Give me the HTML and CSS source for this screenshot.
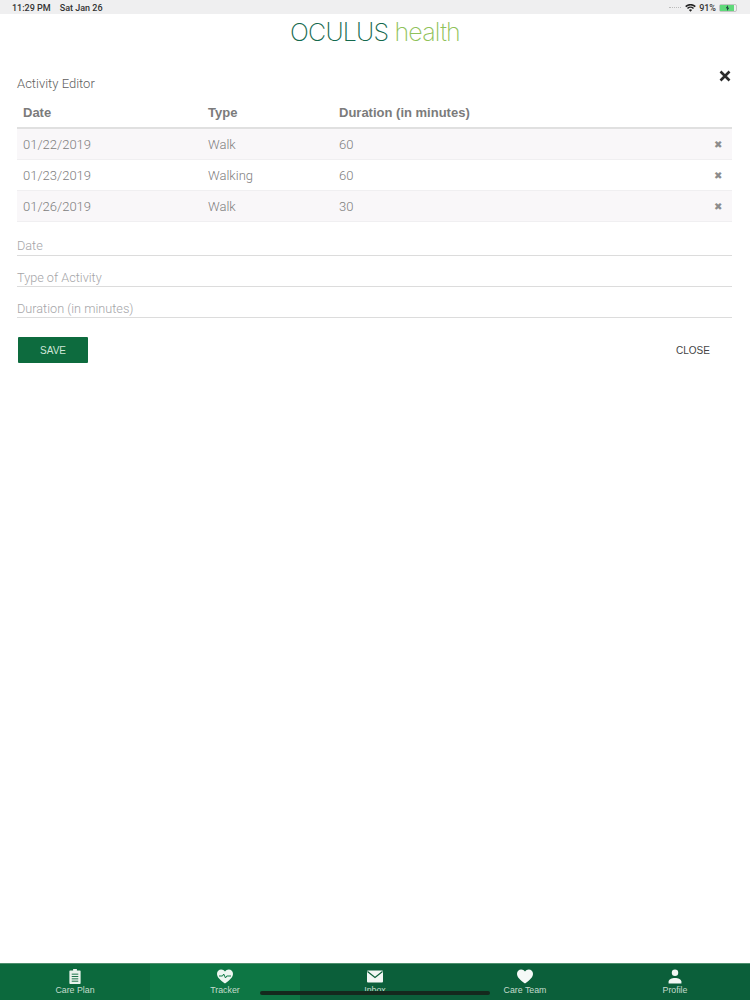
FILE: index.html
```html
<!DOCTYPE html>
<html lang="en">
<head>
<meta charset="utf-8">
<title>Activity Editor</title>
<link rel="stylesheet" href="styles.css">
</head>
<body>
<div class="page">
  <div class="statusbar">
    <div class="status-left"><span>11:29 PM</span><span>Sat Jan 26</span></div>
    <div class="status-right">
      <span class="cell-dots"></span>
      <svg class="wifi" viewBox="0 0 12 9"><path d="M6 8.8 4.2 6.8a2.6 2.6 0 0 1 3.6 0ZM3.2 5.7 2 4.4a5.7 5.7 0 0 1 8 0L8.8 5.7a4 4 0 0 0-5.6 0ZM1.2 3.6 0 2.3a8.6 8.6 0 0 1 12 0l-1.2 1.3a7 7 0 0 0-9.6 0Z" fill="#222"/></svg>
      <span>91%</span>
      <span class="battery"><span class="battery-fill"><svg class="bolt" viewBox="0 0 6 8"><path d="M3.6 0 .8 4.4h2L2.4 8l2.8-4.4h-2Z" fill="#123"/></svg></span></span>
    </div>
  </div>
  <header class="brand"><span class="brand-dark">OCULUS</span> <span class="brand-light">health</span></header>
  <main class="editor">
    <div class="editor-head">
      <h1>Activity Editor</h1>
      <svg class="close-x" viewBox="0 0 12 12"><path d="M1.5 1.5 10.5 10.5M10.5 1.5 1.5 10.5" stroke="#2b2b2b" stroke-width="2.6" fill="none"/></svg>
    </div>
    <div class="table">
      <div class="row head"><span class="c1">Date</span><span class="c2">Type</span><span class="c3">Duration (in minutes)</span></div>
      <div class="row odd"><span class="c1">01/22/2019</span><span class="c2">Walk</span><span class="c3">60</span><span class="del">✖</span></div>
      <div class="row"><span class="c1">01/23/2019</span><span class="c2">Walking</span><span class="c3">60</span><span class="del">✖</span></div>
      <div class="row odd"><span class="c1">01/26/2019</span><span class="c2">Walk</span><span class="c3">30</span><span class="del">✖</span></div>
    </div>
    <div class="fields">
      <div class="field">Date</div>
      <div class="field">Type of Activity</div>
      <div class="field">Duration (in minutes)</div>
    </div>
    <div class="actions">
      <button class="save">SAVE</button>
      <button class="close">CLOSE</button>
    </div>
  </main>
  <nav class="tabbar">
    <div class="tab first">
      <svg viewBox="0 0 14 16"><path d="M5 0h4v1.5h3.2a.8.8 0 0 1 .8.8v12.9a.8.8 0 0 1-.8.8H1.800a.8.8 0 0 1-.8-.8V2.300a.8.8 0 0 1 .8-.8H5Z" fill="#e8f2ec"/><path d="M3.500 5.500h7M3.500 8h7M3.500 10.500h7M3.500 13h7" stroke="#0f6b3f" stroke-width="1"/></svg>
      <span>Care Plan</span>
    </div>
    <div class="tab active">
      <svg viewBox="0 0 16 14"><path d="M8 14C3 10.500 0 7.800 0 4.300 0 1.800 1.900 0 4.200 0 5.800 0 7.200.8 8 2.100 8.800.8 10.200 0 11.800 0 14.100 0 16 1.800 16 4.300 16 7.800 13 10.500 8 14Z" fill="#eef6f1"/><path d="M2 6.500h3.500l1.200-2 1.800 4 1.200-2H14" stroke="#0f7a46" stroke-width="1" fill="none"/></svg>
      <span>Tracker</span>
    </div>
    <div class="tab">
      <svg viewBox="0 0 16 12"><rect width="16" height="12" rx="1" fill="#f2f7f4"/><path d="M.5 1 8 7l7.500-6" stroke="#0b5f38" stroke-width="1.200" fill="none"/></svg>
      <span>Inbox</span>
    </div>
    <div class="tab">
      <svg viewBox="0 0 16 14"><path d="M8 14C3 10.500 0 7.800 0 4.300 0 1.800 1.900 0 4.200 0 5.800 0 7.200.8 8 2.100 8.800.8 10.200 0 11.800 0 14.100 0 16 1.800 16 4.300 16 7.800 13 10.500 8 14Z" fill="#f5f9f7"/></svg>
      <span>Care Team</span>
    </div>
    <div class="tab">
      <svg viewBox="0 0 14 14"><circle cx="7" cy="3.500" r="3" fill="#f2f7f4"/><path d="M1 13.500v-1.500C1 9.800 4 8.400 7 8.400s6 1.400 6 3.600v1.500Z" fill="#f2f7f4"/></svg>
      <span>Profile</span>
    </div>
    <div class="home-bar"></div>
  </nav>
</div>
</body>
</html>
```

FILE: styles.css
```css
* { box-sizing: border-box; }
html, body { margin: 0; padding: 0; background: #fff; }
.page {
  width: 750px;
  height: 1000px;
  display: flex;
  flex-direction: column;
  font-family: Roboto, "Liberation Sans", Arial, sans-serif;
  font-weight: 300;
  overflow: hidden;
}
.statusbar {
  height: 14px;
  flex: none;
  background: #efeff0;
  display: flex;
  align-items: center;
  justify-content: space-between;
  padding: 3px 13px 1px 12px;
  font-size: 9px;
  font-weight: 500;
  color: #333;
}
.status-left { display: flex; gap: 9px; }
.status-right { display: flex; align-items: center; gap: 3px; }
.cell-dots { width: 12px; height: 2px; margin-right: 1px; border-top: 1px dotted #bbb; }
.wifi { width: 11px; height: 8px; }
.battery {
  width: 18px;
  height: 8px;
  border: 1px solid #c4c4c4;
  border-radius: 2px;
  display: flex;
}
.battery-fill {
  width: 90%;
  background: #5fd97a;
  display: flex;
  align-items: center;
  justify-content: center;
}
.bolt { width: 5px; height: 6px; }
.brand {
  height: 36px;
  flex: none;
  text-align: center;
  font-family: Inter, "Liberation Sans", sans-serif;
  font-weight: 200;
  font-size: 25px;
  line-height: 36px;
  letter-spacing: -0.8px;
}
.brand-dark { color: #14694d; }
.brand-light { color: #8fc25a; }
.editor {
  flex: 1;
  padding: 0 18px 0 17px;
}
.editor-head {
  display: flex;
  justify-content: space-between;
  align-items: flex-start;
  height: 47px;
}
h1 {
  margin: 25px 0 0;
  font-size: 13px;
  font-weight: 300;
  color: #5e5e5e;
  line-height: 18px;
}
.close-x { width: 12px; height: 12px; margin: 20px 1px 0 0; }
.row {
  display: flex;
  align-items: center;
  height: 31px;
  padding-left: 6px;
  font-size: 13px;
  color: #808080;
  border-bottom: 1px solid #f0eff1;
}
.row.head {
  height: 32px;
  font-family: "Liberation Sans", Arial, sans-serif;
  font-weight: 700;
  color: #7b7b7b;
  border-bottom: 2px solid #e0e0e0;
}
.row.odd { background: #f9f7f9; }
.c1 { width: 185px; }
.c2 { width: 131px; }
.c3 { flex: 1; }
.del {
  font-family: "DejaVu Sans", sans-serif;
  font-size: 10px;
  font-weight: 400;
  color: #8c8c8c;
  width: 10px;
  margin-right: 8px;
}
.field {
  height: 31px;
  padding-top: 14px;
  border-bottom: 1px solid #dcdcdc;
  font-size: 12.7px;
  line-height: 16px;
  color: #a5a5a8;
}
.field:first-child { height: 34px; padding-top: 16px; }
.actions {
  display: flex;
  justify-content: space-between;
  align-items: center;
  margin-top: 19px;
}
.save {
  width: 70px;
  height: 26px;
  margin-left: 1px;
  border: 0;
  border-radius: 1px;
  background: #0d6b3e;
  color: #cfe6d8;
  font: 400 10px "Liberation Sans", Arial, sans-serif;
}
.close {
  width: 78px;
  border: 0;
  background: none;
  color: #444;
  font: 400 10px "Liberation Sans", Arial, sans-serif;
}
.tabbar {
  position: relative;
  flex: none;
  height: 37px;
  display: flex;
  background: #0b5f3a;
  border-top: 1px solid #4d8f6d;
}
.tab {
  flex: 1;
  display: flex;
  flex-direction: column;
  align-items: center;
  padding-top: 5px;
  color: #c4dccd;
  font-family: "Liberation Sans", Arial, sans-serif;
  font-weight: 400;
  font-size: 8.8px;
  line-height: 10px;
}
.tab svg { height: 15px; width: 16px; margin-bottom: 1px; }
.tab.first { background: #0c693d; }
.tab.active { background: #0d7644; }
.home-bar {
  position: absolute;
  left: 260px;
  top: 27px;
  width: 230px;
  height: 4px;
  border-radius: 2px;
  background: #14291d;
}
```
